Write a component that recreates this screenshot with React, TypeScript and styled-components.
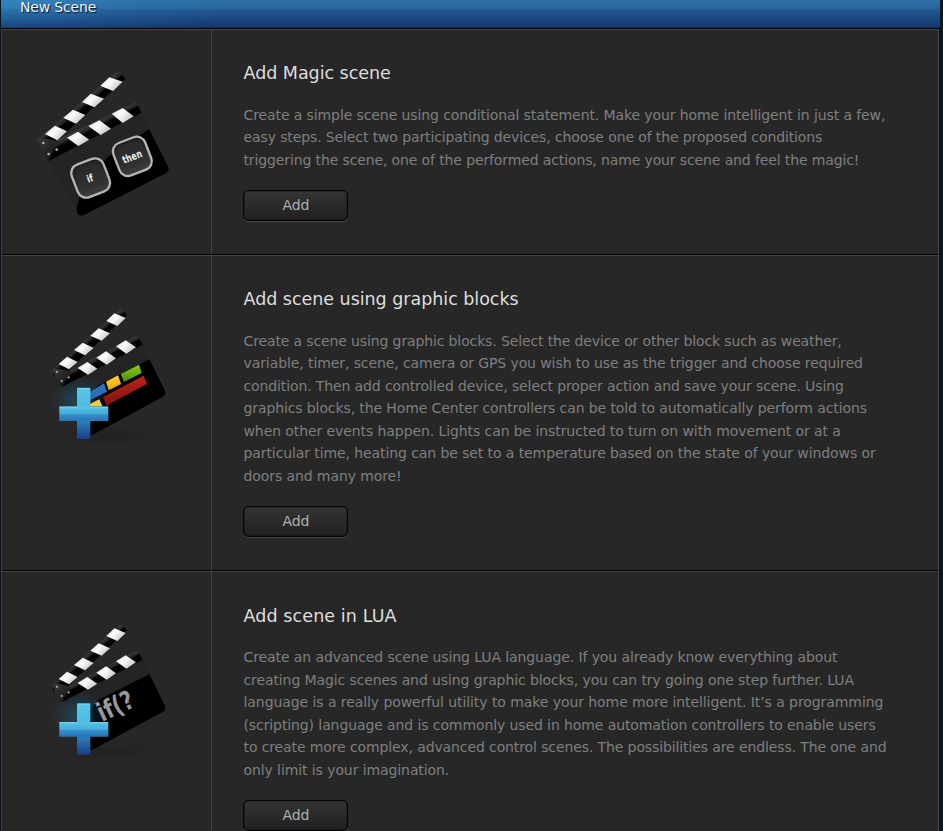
import React from 'react';
import styled, { createGlobalStyle } from 'styled-components';

const GlobalStyle = createGlobalStyle`
  * { box-sizing: border-box; }
  html, body { margin: 0; padding: 0; height: 831px; overflow: hidden; background: #051421; }
  body { font-family: 'DejaVu Sans', Verdana, Tahoma, sans-serif; }
  h2, p { margin: 0; font-weight: normal; }
`;

const Page = styled.main`
  width: 943px;
  height: 831px;
  overflow: hidden;
  padding-left: 1px;
  background: linear-gradient(90deg, #07131e, #051722);
`;

const Header = styled.header`
  width: 939px;
  height: 29px;
  padding-left: 19px;
  border-bottom: 1px solid #000;
  background:
    radial-gradient(ellipse 230px 50px at 0 0, rgba(60, 155, 215, 0.5), rgba(50, 130, 200, 0.18) 55%, rgba(50, 130, 200, 0) 100%),
    linear-gradient(180deg, #2c70a7 0, #29669c 9px, #235b92 9px, #12396f 27px, #0b2b59 28px);
  color: #f2f2f2;
  font-size: 14px;
  line-height: 14px;
  letter-spacing: -0.17px;
  text-shadow: 1px 1px 1px #05152c;
`;

const Panel = styled.div`
  width: 938px;
  border-left: 1px solid #3a3f43;
  border-right: 1px solid #474747;
  background: #272727;
`;

const Row = styled.section<{ $height: number }>`
  display: flex;
  height: ${(p) => p.$height}px;
  border-top: 1px solid #454545;
  border-bottom: 1px solid #000;
`;

const IconCell = styled.div`
  flex: 0 0 210px;
  border-right: 1px solid #444;
`;

const Content = styled.div<{ $top: number }>`
  padding: ${(p) => p.$top}px 0 0 31px;
`;

const Title = styled.h2<{ $spacing: number }>`
  padding-left: 0.5px;
  color: #dedede;
  font-size: 17.5px;
  line-height: 22px;
  letter-spacing: ${(p) => p.$spacing}px;
  white-space: nowrap;
`;

const Description = styled.p`
  margin-top: 19.5px;
  padding-left: 0.5px;
  color: #7f7f7f;
  font-size: 14px;
  line-height: 22.5px;
`;

const Line = styled.span<{ $spacing: number }>`
  display: block;
  letter-spacing: ${(p) => p.$spacing}px;
  white-space: nowrap;
`;

const AddButton = styled.button`
  display: block;
  width: 105px;
  height: 31px;
  margin-top: 19px;
  padding: 0 0 2px 1px;
  border: 1px solid #050505;
  border-radius: 5px;
  background: linear-gradient(#343434, #202020);
  box-shadow: inset 0 0 0 1px rgba(10, 10, 10, 0.35), inset 0 2px 0 #353535, 0 1px 0 #484848;
  color: #b0b0b0;
  font-family: inherit;
  font-size: 14px;
  letter-spacing: -0.1px;
`;

const Drawing = styled.svg<{ $x: number; $y: number }>`
  display: block;
  margin: ${(p) => p.$y}px 0 0 ${(p) => p.$x}px;
`;

const KeyLabel = styled.text`
  fill: #eee;
  font-family: 'DejaVu Sans', sans-serif;
  font-weight: bold;
`;

const GradientSheet = styled.svg`
  display: block;
`;

const barStops = (
  <>
    <stop offset="0" stopColor="#3a3a3a" />
    <stop offset=".4" stopColor="#222" />
    <stop offset=".5" stopColor="#040404" />
    <stop offset="1" stopColor="#000" />
  </>
);

const Definitions = () => (
  <GradientSheet width="0" height="0">
    <defs>
      <linearGradient id="white" x1="0" y1="0" x2="1" y2="0.6">
        <stop offset="0" stopColor="#e2e2e2" /><stop offset=".5" stopColor="#fbfbfb" /><stop offset="1" stopColor="#c4c4c4" />
      </linearGradient>
      <linearGradient id="armA" gradientUnits="userSpaceOnUse" x1="170" y1="136" x2="190" y2="160">{barStops}</linearGradient>
      <linearGradient id="armB" gradientUnits="userSpaceOnUse" x1="227" y1="182" x2="241" y2="210">{barStops}</linearGradient>
      <linearGradient id="armC" gradientUnits="userSpaceOnUse" x1="150" y1="120" x2="168" y2="141">{barStops}</linearGradient>
      <linearGradient id="armD" gradientUnits="userSpaceOnUse" x1="203" y1="160" x2="216" y2="185">{barStops}</linearGradient>
      <linearGradient id="hinge" x1="0" y1="0" x2="1" y2="1">
        <stop offset="0" stopColor="#3a3a3a" /><stop offset="1" stopColor="#101010" />
      </linearGradient>
      <linearGradient id="key" x1="0" y1="0" x2="0" y2="1">
        <stop offset="0" stopColor="#1c1c1c" /><stop offset="1" stopColor="#3c3c3c" />
      </linearGradient>
      <linearGradient id="plus" x1="0" y1="0" x2="0" y2="1">
        <stop offset="0" stopColor="#58c8ea" /><stop offset=".5" stopColor="#49b5df" /><stop offset=".54" stopColor="#3594cc" /><stop offset="1" stopColor="#183d88" />
      </linearGradient>
      <linearGradient id="plusArm" x1="0" y1="0" x2="0" y2="1">
        <stop offset="0" stopColor="#55c4e6" /><stop offset=".5" stopColor="#46acd8" /><stop offset=".56" stopColor="#338fca" /><stop offset="1" stopColor="#2576b8" />
      </linearGradient>
      <linearGradient id="red" x1="0" y1="0" x2=".25" y2="1">
        <stop offset="0" stopColor="#d52a1d" /><stop offset="1" stopColor="#76120c" />
      </linearGradient>
      <linearGradient id="green" x1="0" y1="0" x2="0" y2="1">
        <stop offset="0" stopColor="#8bd010" /><stop offset="1" stopColor="#4c8b08" />
      </linearGradient>
      <linearGradient id="yellow" x1="0" y1="0" x2="0" y2="1">
        <stop offset="0" stopColor="#ffd22b" /><stop offset="1" stopColor="#eda70a" />
      </linearGradient>
      <radialGradient id="glow"><stop offset="0" stopColor="#137aa8" stopOpacity=".4" /><stop offset="1" stopColor="#137aa8" stopOpacity="0" /></radialGradient>
      <radialGradient id="floor"><stop offset="0" stopColor="#191919" stopOpacity=".5" /><stop offset="1" stopColor="#222" stopOpacity="0" /></radialGradient>
    </defs>
  </GradientSheet>
);

const MagicIcon = () => (
  <Drawing $x={18} $y={31} width="170" height="170" viewBox="0 0 510 510">
    <path d="M84 301 364 151 390 204 178 409 170 452Z" fill="#242424" />
    <path d="M387 204 444 316Q450 328 437 337L191 463Q170 470 170 440L178 409 260 290Z" fill="#000" />
    <path d="M51 237 290 34Q296 31 302 38L317 53 110 240 60 255Z" fill="url(#armA)" />
    <path d="M82 255 105 240 347 124Q351 124 353 130L364 155 86 300Q76 292 82 255Z" fill="url(#armB)" />
    <path d="M51 235Q70 229 100 238L120 243 104 262 86 300 78 291Z" fill="url(#hinge)" />
    <g fill="url(#white)">
      <path d="M241 74 268 49 308 62 279 90Z" /><path d="M186 123 212 98 252 113 223 139Z" />
      <path d="M130 170 159 146 196 162 168 188Z" /><path d="M75 219 105 194 141 211 112 238Z" />
      <path d="M275 158 308 141 341 166 308 186Z" /><path d="M205 195 238 178 273 203 242 222Z" />
      <path d="M141 230 174 212 208 236 175 255Z" />
    </g>
    <g fill="#aaa"><circle cx="70" cy="246" r="4" /><circle cx="86" cy="279" r="4" /><circle cx="110" cy="266" r="4" /></g>
    <g transform="translate(212 351) rotate(-21)">
      <rect x="-51" y="-52" width="102" height="104" rx="27" fill="url(#key)" stroke="#b5b5b5" strokeWidth="7" />
      <rect x="-40" y="-44" width="80" height="76" rx="24" fill="#303030" opacity=".6" />
      <KeyLabel x="-12" y="11" fontSize="30" textLength="19" lengthAdjust="spacingAndGlyphs">if</KeyLabel>
    </g>
    <g transform="translate(337 286) rotate(-21)">
      <rect x="-51" y="-52" width="102" height="104" rx="27" fill="url(#key)" stroke="#b5b5b5" strokeWidth="7" />
      <rect x="-40" y="-44" width="80" height="76" rx="24" fill="#303030" opacity=".6" />
      <KeyLabel x="-31" y="12" fontSize="32" textLength="60" lengthAdjust="spacingAndGlyphs">then</KeyLabel>
    </g>
  </Drawing>
);

const Clapper = () => (
  <>
    <ellipse cx="225" cy="410" rx="205" ry="36" fill="url(#floor)" />
    <path d="M84 258 322 136 343 180 150 330Z" fill="#242424" />
    <path d="M343 178 390 272Q394 283 384 290L173 404H142V310L190 255Z" fill="#000" />
    <path d="M50 211 253 31Q259 25 265 33L276 46 98 214 58 230Z" fill="url(#armC)" />
    <path d="M76 230 99 215 307 106 323 134 80 262Q70 254 76 230Z" fill="url(#armD)" />
    <path d="M50 208Q68 203 94 212L112 216 96 234 80 262 71 250Z" fill="url(#hinge)" />
    <g fill="url(#white)">
      <path d="M214 63 238 40 272 54 247 78Z" /><path d="M166 107 191 85 225 100 200 122Z" />
      <path d="M117 150 143 128 176 144 150 166Z" /><path d="M71 192 96 170 128 186 102 208Z" />
      <path d="M243 139 272 121 303 142 274 161Z" /><path d="M184 173 213 154 243 175 215 194Z" />
      <path d="M128 204 157 186 187 206 159 224Z" />
    </g>
    <g fill="#999"><circle cx="66" cy="216" r="3.5" /><circle cx="80" cy="243" r="3.5" /><circle cx="101" cy="232" r="3.5" /></g>
    <ellipse cx="136" cy="299" rx="88" ry="68" fill="url(#glow)" />
  </>
);

const Plus = () => (
  <g>
    <path d="M126 264H166V417H126Z" fill="url(#plus)" />
    <path d="M73 320H220V363H73Z" fill="url(#plusArm)" />
    <path d="M127 265H165M73 321H126M166 321H219" stroke="#7ddcf1" strokeWidth="3" />
  </g>
);

const BlocksIcon = () => (
  <Drawing $x={33} $y={44} width="150" height="150" viewBox="0 0 450 450">
    <Clapper />
    <path d="M155 283 207 249 216 275 166 300Z" fill="#2a70b8" />
    <path d="M213 245 249 226 258 252 221 271Z" fill="url(#yellow)" />
    <path d="M257 222 312 194 320 219 267 246Z" fill="url(#green)" />
    <path d="M204 291 326 227 336 252 214 317Z" fill="url(#red)" />
    <path d="M164 312 193 298 202 319H164Z" fill="#f4cb42" />
    <Plus />
  </Drawing>
);

const LuaLabel = styled.text`
  fill: #999;
  font-family: 'DejaVu Sans', sans-serif;
  font-size: 78px;
  font-weight: bold;
`;

const LuaIcon = () => (
  <Drawing $x={33} $y={43} width="150" height="150" viewBox="0 0 450 450">
    <Clapper />
    <LuaLabel transform="translate(201 321) rotate(-25)" textLength="113" lengthAdjust="spacingAndGlyphs">if(?</LuaLabel>
    <g transform="translate(0 2)"><Plus /></g>
  </Drawing>
);

type SceneLine = [text: string, spacing: number];

const scenes: { title: string; spacing: number; height: number; top: number; icon: React.ReactNode; lines: SceneLine[] }[] = [
  {
    title: 'Add Magic scene', spacing: -0.03, height: 226, top: 32, icon: <MagicIcon />,
    lines: [
      ['Create a simple scene using conditional statement. Make your home intelligent in just a few,', -0.1],
      ['easy steps. Select two participating devices, choose one of the proposed conditions', -0.115],
      ['triggering the scene, one of the performed actions, name your scene and feel the magic!', -0.122],
    ],
  },
  {
    title: 'Add scene using graphic blocks', spacing: -0.03, height: 316, top: 32, icon: <BlocksIcon />,
    lines: [
      ['Create a scene using graphic blocks. Select the device or other block such as weather,', -0.128],
      ['variable, timer, scene, camera or GPS you wish to use as the trigger and choose required', -0.09],
      ['condition. Then add controlled device, select proper action and save your scene. Using', -0.118],
      ['graphics blocks, the Home Center controllers can be told to automatically perform actions', -0.108],
      ['when other events happen. Lights can be instructed to turn on with movement or at a', -0.087],
      ['particular time, heating can be set to a temperature based on the state of your windows or', -0.092],
      ['doors and many more!', -0.095],
    ],
  },
  {
    title: 'Add scene in LUA', spacing: 0.1, height: 316, top: 32.5, icon: <LuaIcon />,
    lines: [
      ['Create an advanced scene using LUA language. If you already know everything about', -0.09],
      ['creating Magic scenes and using graphic blocks, you can try going one step further. LUA', -0.1],
      ['language is a really powerful utility to make your home more intelligent. It’s a programming', -0.072],
      ['(scripting) language and is commonly used in home automation controllers to enable users', -0.1],
      ['to create more complex, advanced control scenes. The possibilities are endless. The one and', -0.11],
      ['only limit is your imagination.', -0.09],
    ],
  },
];

export default function App() {
  return (
    <Page>
      <GlobalStyle />
      <Header>New Scene</Header>
      <Definitions />
      <Panel>
        {scenes.map((scene) => (
          <Row key={scene.title} $height={scene.height}>
            <IconCell>{scene.icon}</IconCell>
            <Content $top={scene.top}>
              <Title $spacing={scene.spacing}>{scene.title}</Title>
              <Description>
                {scene.lines.map(([text, spacing]) => (
                  <Line key={text} $spacing={spacing}>{text}</Line>
                ))}
              </Description>
              <AddButton>Add</AddButton>
            </Content>
          </Row>
        ))}
      </Panel>
    </Page>
  );
}
